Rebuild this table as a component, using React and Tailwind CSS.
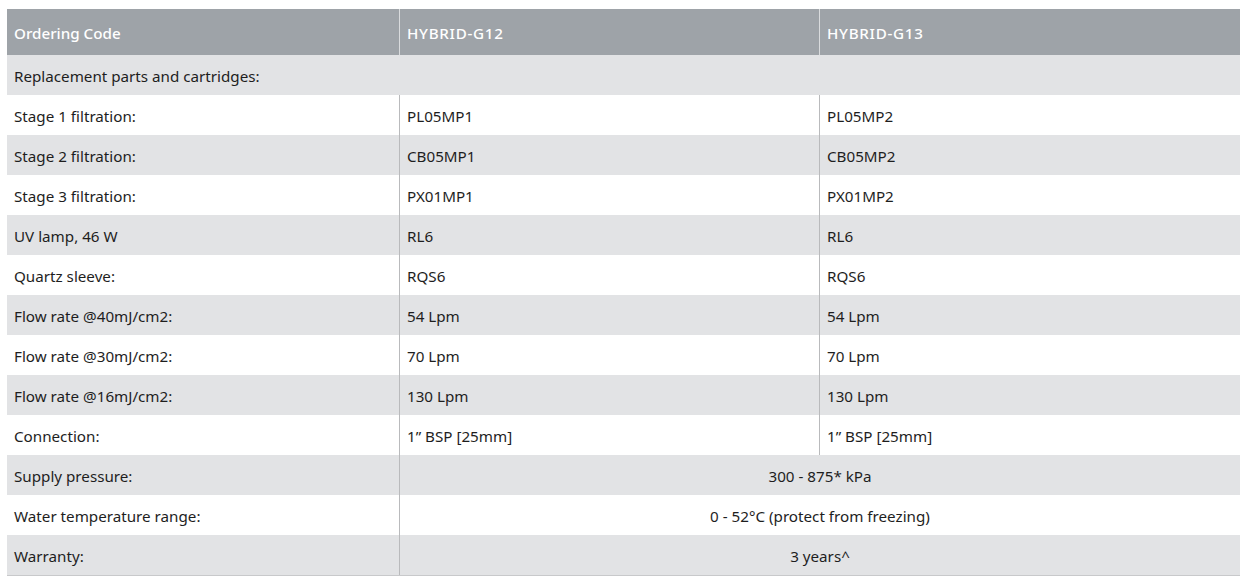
import React from 'react';

const rows = [
  { label: 'Stage 1 filtration:', a: 'PL05MP1', b: 'PL05MP2' },
  { label: 'Stage 2 filtration:', a: 'CB05MP1', b: 'CB05MP2' },
  { label: 'Stage 3 filtration:', a: 'PX01MP1', b: 'PX01MP2' },
  { label: 'UV lamp, 46 W', a: 'RL6', b: 'RL6' },
  { label: 'Quartz sleeve:', a: 'RQS6', b: 'RQS6' },
  { label: 'Flow rate @40mJ/cm2:', a: '54 Lpm', b: '54 Lpm' },
  { label: 'Flow rate @30mJ/cm2:', a: '70 Lpm', b: '70 Lpm' },
  { label: 'Flow rate @16mJ/cm2:', a: '130 Lpm', b: '130 Lpm' },
  { label: 'Connection:', a: '1” BSP [25mm]', b: '1” BSP [25mm]' },
];

const merged = [
  { label: 'Supply pressure:', value: '300 - 875* kPa' },
  { label: 'Water temperature range:', value: '0 - 52°C (protect from freezing)' },
  { label: 'Warranty:', value: '3 years^' },
];

function App() {
  // row 0 is the "Replacement parts" row, so stage 1 is index 1 (white)
  const bg = (i) => (i % 2 === 0 ? 'bg-[#e2e3e5]' : 'bg-white');

  return (
    <div className="bg-white min-h-screen pt-[9px] px-[7px]" style={{ fontFamily: '"Noto Sans", "Open Sans", sans-serif' }}>
      <div className="w-[1233px] text-[15.2px] text-[#1e1e1e] border-b border-[#c8c9cb]">
        {/* Header */}
        <div className="grid grid-cols-[392px_420px_421px] h-[46px] bg-[#9ea3a8] text-white font-medium">
          <div className="flex items-center pl-[7px] pt-[2px]">Ordering Code</div>
          <div className="flex items-center pl-[7px] pt-[2px] tracking-[0.7px] border-l border-[#d9dbdd]">HYBRID-G12</div>
          <div className="flex items-center pl-[7px] pt-[2px] tracking-[0.7px] border-l border-[#d9dbdd]">HYBRID-G13</div>
        </div>

        <div className={`h-[40px] flex items-center pl-[7px] pt-[3px] ${bg(0)}`}>Replacement parts and cartridges:</div>

        {rows.map((r, i) => (
          <div key={r.label} className={`grid grid-cols-[392px_420px_421px] h-[40px] ${bg(i + 1)}`}>
            <div className="flex items-center pl-[7px] pt-[2px]">{r.label}</div>
            <div className="flex items-center pl-[7px] pt-[2px] border-l border-[#b9babc]">{r.a}</div>
            <div className="flex items-center pl-[7px] pt-[2px] border-l border-[#b9babc]">{r.b}</div>
          </div>
        ))}

        {merged.map((r, i) => (
          <div key={r.label} className={`grid grid-cols-[392px_841px] h-[40px] ${bg(i + 1 + rows.length)}`}>
            <div className="flex items-center pl-[7px] pt-[2px]">{r.label}</div>
            <div className="flex items-center justify-center pt-[2px] border-l border-[#b9babc]">{r.value}</div>
          </div>
        ))}
      </div>
    </div>
  );
}

export default App;
